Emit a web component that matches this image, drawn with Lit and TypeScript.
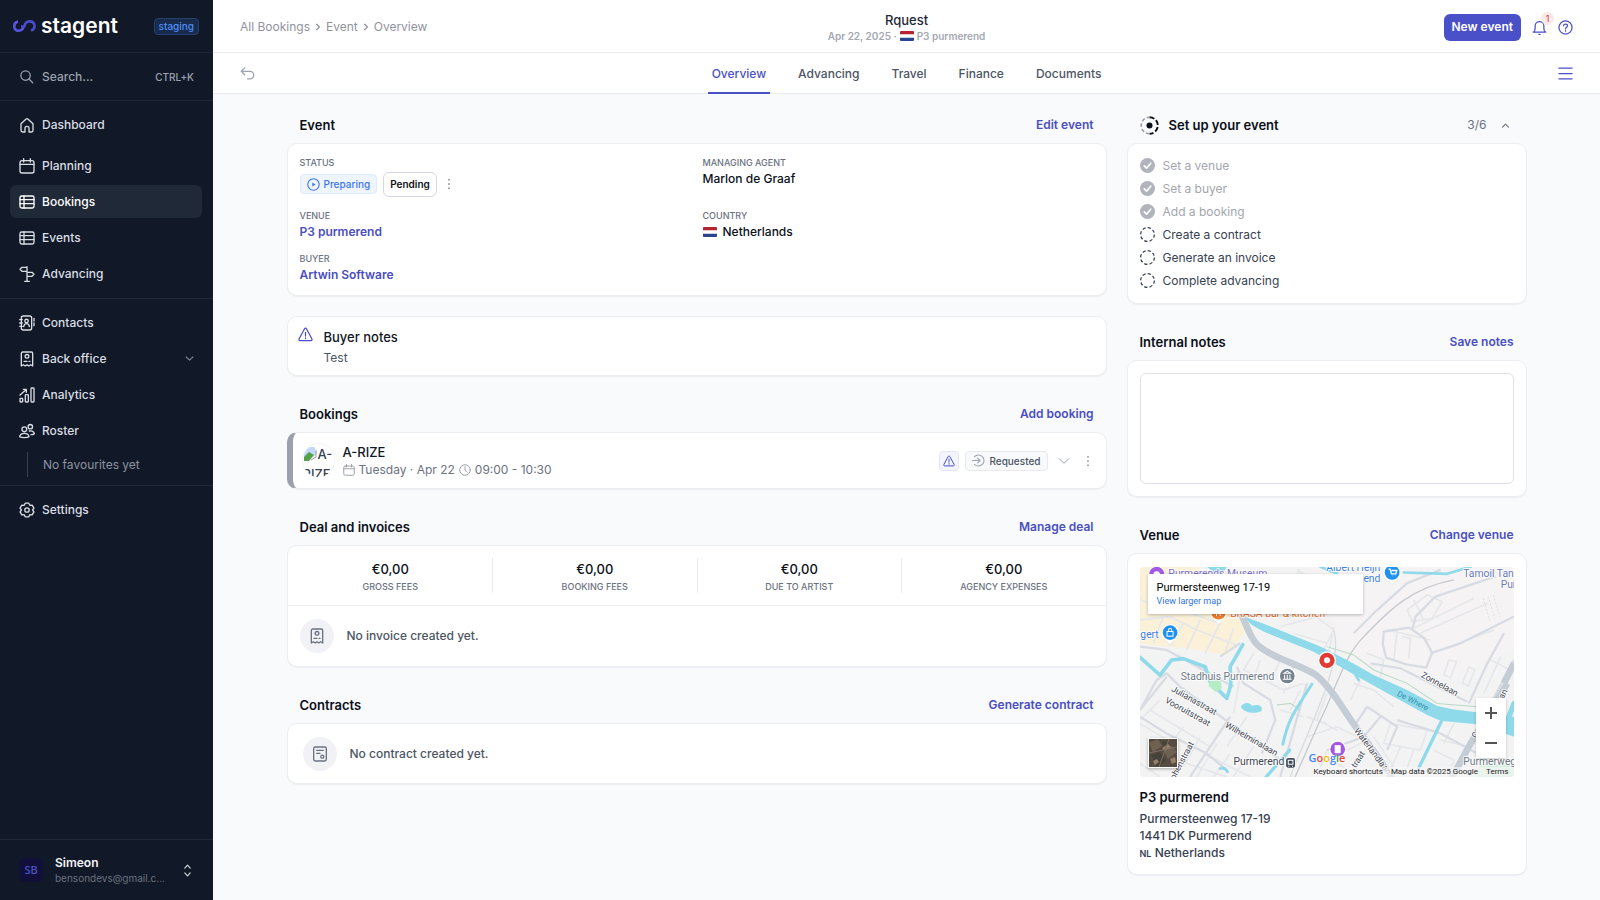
import { LitElement, html, css, svg, nothing } from "lit";
import type { TemplateResult, SVGTemplateResult } from "lit";
import { customElement } from "lit/decorators.js";
import { classMap } from "lit/directives/class-map.js";

const glyphs: Record<string, SVGTemplateResult> = {
  search: svg`<circle cx="10.5" cy="10.5" r="7.5"/><path d="M16 16l6 6"/>`,
  home: svg`<path d="M3 10.2 10.7 3a2 2 0 0 1 2.6 0L21 10.2V20a2.5 2.5 0 0 1-2.5 2.5H15V17a3 3 0 0 0-6 0v5.500H5.500A2.500 2.500 0 0 1 3 20z"/>`,
  calendar: svg`<rect x="1.500" y="4" width="21" height="18.500" rx="3"/><path d="M1.500 9.500h21M7 1v5M17 1v5"/>`,
  table: svg`<rect x="1.500" y="3" width="21" height="18" rx="2.500"/><path d="M1.500 8.500h21M1.500 14.500h21M7.500 3v18"/>`,
  signpost: svg`<path d="M12 1v22M8.500 23h7M12 2H4.500L1.500 5l3 3H12M12 9.500h7.500l3 3-3 3H12"/>`,
  contacts: svg`<rect x="3.500" y="1.500" width="15.500" height="21" rx="3"/><circle cx="11.300" cy="9" r="2.600"/><path d="M7 17.500c.5-3 2-4.500 4.300-4.500s3.800 1.500 4.300 4.500M1 7h4M1 12h4M1 17h4M22.500 5v4M22.500 12v4"/>`,
  receipt: svg`<path d="M3.500 22.500V3.500a2 2 0 0 1 2-2h13a2 2 0 0 1 2 2v19l-3-1.800-2.800 1.800-2.700-1.800-2.700 1.800-2.800-1.800z"/><circle cx="12" cy="8" r="2.800"/><path d="M7.500 15.500h4.500M15 15.500h1.500"/>`,
  chart: svg`<rect x="1.500" y="17" width="4" height="5.500" rx="1"/><rect x="9.500" y="11.500" width="4.500" height="11" rx="1"/><rect x="18" y="1.500" width="4.500" height="21" rx="1"/><path d="M1.500 12 10.500 4M6.500 3.500h4.500V8"/>`,
  people: svg`<circle cx="8" cy="9.500" r="3.600"/><path d="M1 20.500C1.500 17 4 15.500 8 15.500s6.500 1.500 7 5c-2 1.800-12 1.800-14 0z"/><circle cx="17" cy="5.500" r="3.300"/><path d="M15.500 12c4-.8 7 .8 7.500 4-1 1-3 1.500-5 1.500"/>`,
  gear: svg`<path d="M9.300 1.800h5.400l1.500 3.200 3.500-.3 2.700 4.600L20.300 12l2.100 2.700-2.700 4.600-3.500-.3-1.500 3.200H9.300L7.800 19l-3.500.3-2.700-4.600L3.700 12 1.600 9.300l2.700-4.600 3.500.3z"/><circle cx="12" cy="12" r="3.300"/>`,
  down: svg`<path d="M3 8l9 8.500L21 8"/>`,
  up: svg`<path d="M4 16.500l8-8 8 8"/>`,
  right: svg`<path d="M8 4l8 8-8 8"/>`,
  updown: svg`<path d="M7 7.500l5-5.500 5 5.500M7 16.500l5 5.500 5-5.500"/>`,
  undo: svg`<path d="M7.500 3 2 8.500l5.500 5.500M2 8.500h14a6 6 0 0 1 0 12h-4"/>`,
  bell: svg`<path d="M2 19.500c2.500-1 3-2.500 3-6V9.500a7 7 0 0 1 14 0v4c0 3.500.5 5 3 6z"/><path d="M11 22.800h2"/>`,
  help: svg`<circle cx="12" cy="12" r="10.500"/><path d="M8.800 9.300c.2-3.800 6.400-3.800 6.400 0 0 2.200-3.200 2.500-3.200 4.900M12 17v.8"/>`,
  menu: svg`<path d="M1.500 3.500h21M1.500 12h21M1.500 20.500h21"/>`,
  play: svg`<circle cx="12" cy="12" r="10.500"/><path d="M9.800 8.300v7.400l5.800-3.700z" fill="currentColor" stroke="none"/>`,
  alert: svg`<path d="M10.500 2.800c.7-1.200 2.300-1.200 3 0l8.800 16.400c.6 1.300-.2 2.600-1.500 2.600H3.200c-1.300 0-2.100-1.300-1.500-2.600z"/><path d="M12 8.500v6M12 17.300v1.200"/>`,
  clock: svg`<circle cx="12" cy="12" r="10.500"/><path d="M12 5.500V12l4 4.500"/>`,
  arrowin: svg`<path d="M4.500 4.800A10.300 10.300 0 1 1 4.500 19.200M1 12h14M10.500 7.500 15 12l-4.500 4.500"/>`,
  dots: svg`<g fill="currentColor" stroke="none"><circle cx="12" cy="3.500" r="1.900"/><circle cx="12" cy="12" r="1.900"/><circle cx="12" cy="20.500" r="1.900"/></g>`,
  contract: svg`<rect x="2.500" y="1.500" width="19" height="21" rx="2.500"/><path d="M7 6.500h10M7 11h5"/><circle cx="15.500" cy="16" r="2.300"/>`,
  done: svg`<circle cx="12" cy="12" r="12" fill="currentColor" stroke="none"/><path d="M6.800 12.500l3.700 3.800 6.700-8" stroke="#fff" stroke-width="2.600"/>`,
  todo: svg`<circle cx="12" cy="12" r="11" stroke-linecap="butt" stroke-dasharray="5.200 3.440"/>`,
  progress: svg`<g stroke-linecap="butt"><path d="M12 1.500a10.500 10.500 0 0 1 0 21" stroke="#0b0f19" stroke-width="2.400" stroke-dasharray="6.500 2.700"/><path d="M12 22.500a10.500 10.500 0 0 1 0-21" stroke="#9a9da6" stroke-width="2" stroke-dasharray="4.500 2.800"/></g><circle cx="12" cy="12" r="3.800" fill="#0b0f19" stroke="none"/>`,
};

const icon = (name: string, size = 16, weight = 2): TemplateResult => html`<svg
  class="icon" width=${size} height=${size} viewBox="0 0 24 24" fill="none" stroke="currentColor"
  stroke-width=${weight} stroke-linecap="round" stroke-linejoin="round" overflow="visible" aria-hidden="true">${glyphs[name]}</svg>`;

const flag = html`<svg class="icon" width="14" height="10" viewBox="0 0 14 10" role="img" aria-label="Dutch flag">
  <rect width="14" height="10" rx="1" fill="#fff"/>
  <path d="M0 3.300V1a1 1 0 0 1 1-1h12a1 1 0 0 1 1 1v2.300z" fill="#b5232e"/>
  <path d="M0 6.700V9a1 1 0 0 0 1 1h12a1 1 0 0 0 1-1V6.700z" fill="#27458f"/>
</svg>`;

const pin = (x: number, y: number, fill: string, r = 22): SVGTemplateResult => svg`<g transform="translate(${x} ${y})">
  <path d="M-17 18L0 37 17 18z" fill="#fff" stroke="#c9ccd1" stroke-width="1"/>
  <circle r=${r + 4} fill="#fff"/><circle r=${r} fill=${fill}/></g>`;

@customElement("venue-map")
class VenueMap extends LitElement {
  static styles = css`
    :host { display: block; position: relative; height: 210px; overflow: hidden; border-radius: 4px; font-family: Roboto, sans-serif; }
    .canvas { display: block; width: 100%; height: 100%; }
    .info { position: absolute; left: 8px; top: 7px; width: 215px; height: 40px; box-sizing: border-box; padding: 6px 9px; background: #fff; box-shadow: 0 1px 3px rgba(0,0,0,.25); }
    .info strong { display: block; font-size: 11px; line-height: 15px; font-weight: 400; color: #000; }
    .info a { display: block; font-size: 9px; line-height: 12px; color: #2f74e0; text-decoration: none; }
    .zoom { position: absolute; right: 8px; top: 131px; width: 30px; background: #fff; box-shadow: 0 1px 3px rgba(0,0,0,.2); }
    .zoom button { display: grid; place-items: center; width: 30px; height: 30px; padding: 0; border: 0; background: none; }
    .zoom svg { display: block; }
    .layer { position: absolute; left: 8px; bottom: 9px; width: 30px; height: 30px; padding: 0; border: 1px solid #fff; background: #5d5148; box-shadow: 0 1px 3px rgba(0,0,0,.3); overflow: hidden; }
    .layer svg { display: block; }
    .google { position: absolute; left: 169px; bottom: 11px; font-family: "Open Sans", sans-serif; font-size: 11px; line-height: 16px; font-weight: 600; text-shadow: 0 0 2px #fff; }
    .b { color: #4285f4; } .r { color: #ea4335; } .y { color: #fbbc05; } .g { color: #34a853; }
    .legal { position: absolute; right: 0; bottom: 0; display: flex; gap: 8px; padding: 0 5px; font-size: 8px; line-height: 10px; color: #222; background: rgba(245,245,245,.7); }
    .legal a { color: inherit; text-decoration: none; }
    .legal button { font: inherit; color: inherit; padding: 0; border: 0; background: none; }
    .place { font-size: 31px; }
    .street { font-size: 26px; fill: #3c4450; }
    .halo { paint-order: stroke; stroke: #fff; stroke-width: 5px; stroke-linejoin: round; }
  `;

  private drawing() {
    return html`<svg class="canvas" viewBox="60 51 1120 630" preserveAspectRatio="xMidYMid slice" role="img" aria-label="Map of Purmerend">
      <rect x="0" y="0" width="1300" height="760" fill="#f3f3f4"/>
      <path d="M60 51h170l120 130 30 60-60 75-120-22-140-12z" fill="#fbf0d8"/>
      <path d="M560 51h620v250l-200 80-300-80-40-60z" fill="#f5f3f3"/>
      <path d="M1080 640h100v50h-120z" fill="#d5f1de"/>
      <g fill="none" stroke="#e5e7ea" stroke-width="5" stroke-linejoin="round">
        <path d="M60 210l90-10 80 40 120 45M130 200l-30 80M190 220l-40 70M240 210l-40 90M300 220l-45 90M180 180l120 40M340 235l-25 70M60 150l60 20"/>
        <path d="M440 205l60-100M500 210l50-60M560 180l80 60-30 60M480 230l150-40M520 250l100 30M640 230l-15 80M540 60l-50 60M600 100l-70-40M680 180l40-70M640 160l60 30"/>
        <path d="M860 180l60-45 45 20-30 50-60 10zM880 235l180-90M900 250l200-90M960 300l160-60M880 150l30 60M985 330l-15 45 20 8 18-48zM1045 350l-20 50 18 8 20-48zM800 240l130 30M830 240l-10 90M845 260l25 5-5 60M740 310l50 20-10 50M1110 330l60 30M1090 430l50-110"/>
        <path d="M400 310l-30 50 120 60 60-20M420 330l-20 60M480 330l-30 70M520 350l-30 80M540 420l-30 60M480 480l70 20M560 500l60 20M360 380l-20 110M560 560l90-30 60 30"/>
        <path d="M620 430l-30 80 60 30M700 400l60 20 60 50M720 390l-30 60M810 520l110 20-20 60-110-20zM760 560l60 90M840 590l-40 90M880 600l-30 80M940 600l60 30-20 50M960 570l90 20M1000 520l-30 60M680 600l60-30 60 80M620 600l-30 80M650 640l50 30"/>
        <path d="M60 520l100 60M90 480l180 110M120 450l-60 60M190 530l-60 80M240 560l-50 90M290 580l-60 100M330 610l-50 70M340 530l90 50M380 500l-60 90M200 640l120 40M400 590l-60 90M250 610l140 70M60 640l60 40"/>
      </g>
      <path d="M1088 145l20 70M1103 140l20 68M1118 135l20 66" fill="none" stroke="#d3d6db" stroke-width="2" stroke-dasharray="6 5"/>
      <g fill="none" stroke="#d8dce2" stroke-width="7" stroke-linejoin="round">
        <path d="M60 290l80 10 110 60M60 480l50-90 30-20 40 40 150 110 150 110M140 380l-80 100M330 500l-120 180M350 350l20 50 80 50 15 60-40 100M250 360l90 50M300 320l60-40M60 500l80 50 120 60 60 50"/>
        <path d="M700 250l60-60 100-90 100-40M790 245l75-12 45 30 25 45-18 45-60-10-60-20-10-40zM875 240l10-40 60-60 120-40 60-20M1150 250l-50 90-55 120M930 310l90-30 160-80M750 340l90 15 120 60 80 40M740 470l-40 60M740 470l90 60-30 70M830 510l130 40 110 60M620 600l110-40 50-60M560 400l-80 280M1180 330l-80 150"/>
      </g>
      <path d="M1000 90C860 115 790 200 730 260c-60 60-80 150-130 250l-80 180" fill="none" stroke="#c6c9ce" stroke-width="4"/>
      <path d="M640 240c30 90-60 260-130 440" fill="none" stroke="#dadce0" stroke-width="4"/>
      <g fill="none" stroke="#b9d9c2" stroke-width="3"><path d="M620 290l80 25 60 45 100 40 90 60 120 10"/><path d="M470 465l40-5 30 20"/></g>
      <g fill="none" stroke="#8edaea" stroke-linejoin="round" stroke-linecap="round">
        <path d="M60 322l60 53 35-45 35-4 65 24 15 45 50 50 12-40-2-55 38-66" stroke-width="11"/>
        <path d="M575 402c-50 80-70 100-87 180" stroke-width="9"/>
        <path d="M508 600l-70 80M962 515l-68 140" stroke-width="10"/>
        <path d="M600 51l50 20M850 68l130 4 70-21" stroke-width="8"/>
        <path d="M300 655q15-5 22 10M705 375l10 15" stroke-width="8"/>
        <path d="M1180 460l-15 40" stroke-width="16"/>
      </g>
      <path d="M260 51h60l-20 30zM362 470c10-16 26-14 34-2 16-8 34 0 28 14-16 12-54 6-62-12z" fill="#8edaea"/>
      <path d="M275 375l25 5 5 35-18 12-22-20z" fill="#b4edc5"/>
      <path d="M368 198l72 27 160 65 80 40 80 45 100 45 90 48 50 10 180 22v60l-80-28-40-10-100-10-40-17-100-55-100-55-60-35-80-45-150-60-35-20z" fill="#8edaea"/>
      <path d="M362 190c20 40 25 70 50 95 40 38 130 60 175 90 50 40 90 120 130 170 40 55 70 90 100 145" fill="none" stroke="#c4ccd6" stroke-width="20"/>
      <path d="M1160 400l-110 180-60 110M1180 340l-30 60" fill="none" stroke="#c4ccd6" stroke-width="20"/>
      <g class="place halo">
        <text x="145" y="82" fill="#7b6fc0">Purmerends Museum</text>
        <text x="618" y="65" fill="#3b7de0">Albert Heijn</text>
        <text x="729" y="97" fill="#3b7de0">end</text>
        <text x="1028" y="82" fill="#6b78b8">Tamoil Tankstation</text>
        <text x="1140" y="113" fill="#6b78b8">Purmerend</text>
        <text x="330" y="201" fill="#e0702a">BRASA bar &amp; kitchen</text>
        <text x="61" y="263" fill="#3b7de0">gert</text>
        <text x="182" y="390" fill="#6d7785">Stadhuis Purmerend</text>
        <text x="340" y="646" fill="#3c4450">Purmerend</text>
        <text x="1028" y="646" fill="#6d7785">Purmerweg</text>
      </g>
      <g class="street halo">
        <text transform="translate(152 422) rotate(29)">Julianastraat</text>
        <text transform="translate(133 456) rotate(29)">Vooruitstraat</text>
        <text transform="translate(313 530) rotate(30)">Wilhelminalaan</text>
        <text transform="translate(900 380) rotate(29)">Zonnelaan</text>
        <text transform="translate(700 542) rotate(53)">Waterlandlaan</text>
        <text transform="translate(706 655) rotate(-58)">traat</text>
        <text transform="translate(164 690) rotate(-62)">ohenstraat</text>
        <text transform="translate(1148 448) rotate(-62)">an</text>
        <text transform="translate(1068 566) rotate(-62)">C</text>
      </g>
      <text transform="translate(828 436) rotate(27)" font-size="24" fill="#3592ab">De Where</text>
      <circle cx="110" cy="74" r="26" fill="#fff"/><circle cx="110" cy="74" r="23" fill="#a259e6"/><circle cx="110" cy="74" r="10" fill="#fff"/>
      ${pin(815, 68, "#1e90f0")}
      ${pin(295, 187, "#ef7f31")}
      ${pin(150, 248, "#1e90f0")}
      ${pin(501, 378, "#76838f")}
      ${pin(652, 597, "#a259e6")}
      ${pin(620, 331, "#e03c35", 23)}
      <circle cx="620" cy="331" r="9" fill="#fff"/>
      <rect x="643" y="585" width="18" height="24" fill="#fff"/>
      <path d="M141 245h18v14h-18zM145 245v-4a5 5 0 0 1 10 0v4" fill="none" stroke="#fff" stroke-width="3"/>
      <path d="M804 58h5l4 14h13l3-10h-16M815 78h1M824 78h1" fill="none" stroke="#fff" stroke-width="4"/>
      <path d="M488 388h26M491 370h20l-10-7zM493 374v12M501 374v12M509 374v12" fill="none" stroke="#fff" stroke-width="3"/>
      <path d="M289 180v18M300 180v18M285 180v8h8v-8" fill="none" stroke="#fff" stroke-width="3"/>
      <rect x="496" y="622" width="30" height="32" rx="8" fill="#3f4b5a" stroke="#fff" stroke-width="3"/>
      <path d="M504 630h14v12h-14zM504 648h3M515 648h3" fill="none" stroke="#fff" stroke-width="3"/>
    </svg>`;
  }

  render() {
    return html`${this.drawing()}
      <div class="info"><strong>Purmersteenweg 17-19</strong><a href="#map">View larger map</a></div>
      <button class="layer" aria-label="Show satellite imagery">
        <svg width="28" height="28" viewBox="0 0 28 28"><rect width="28" height="28" fill="#574b41"/>
          <path d="M0 4l9-4 4 7-9 6zM15 12l8-5 5 6-9 7z" fill="#6f6151"/><path d="M2 16l9-3 6 9-9 6zM12 2l7 1-3 6z" fill="#45423a"/>
          <path d="M13 9l6-4 3 3-6 4zM4 22l4-2 2 3-4 3zM21 20l5-2 1 5-4 2z" fill="#94806b"/><path d="M0 14l28-6M10 28L20 0" stroke="#7a6f63"/></svg>
      </button>
      <div class="zoom">
        <button aria-label="Zoom in"><svg width="14" height="14"><path d="M7 1v12M1 7h12" stroke="#555" stroke-width="2"/></svg></button>
        <button aria-label="Zoom out"><svg width="14" height="14"><path d="M1 7h12" stroke="#555" stroke-width="2"/></svg></button>
      </div>
      <div class="google" aria-label="Google"><span class="b">G</span><span class="r">o</span><span class="y">o</span><span class="b">g</span><span class="g">l</span><span class="r">e</span></div>
      <div class="legal"><button>Keyboard shortcuts</button><span>Map data ©2025 Google</span><a href="#terms">Terms</a></div>`;
  }
}

interface NavItem { icon: string; label: string; active?: boolean; expandable?: boolean; first?: boolean; }

@customElement("app-root")
class AppRoot extends LitElement {
  static styles = css`
    :host { display: flex; min-height: 100vh; font-family: Inter, sans-serif; font-size: 12px; line-height: 20px; color: #111827; background: #f8fafc; }
    * { box-sizing: border-box; }
    h1, h2, h3, p, ul, dl, dd { margin: 0; padding: 0; font-weight: inherit; font-size: inherit; }
    ul { list-style: none; }
    a { color: inherit; text-decoration: none; }
    button { font: inherit; color: inherit; padding: 0; border: 0; background: none; }
    .icon { display: block; flex: none; }

    .side { position: sticky; top: 0; flex: none; display: flex; flex-direction: column; width: 213px; height: 100vh; background: #111827; color: #d9dde4; font-weight: 500; }
    .brand { display: flex; align-items: center; justify-content: space-between; height: 53px; padding: 0 14px 0 13px; border-bottom: 1px solid #1f2937; }
    .logo { display: flex; align-items: center; gap: 5px; color: #fff; font-size: 21px; font-weight: 600; line-height: 28px; }
    .env { height: 17px; padding: 0 4px; border: 1px solid #24406f; border-radius: 4px; background: #182b4d; color: #4f8df5; font-size: 10px; line-height: 15px; }
    .search { display: flex; align-items: center; gap: 8px; height: 48px; padding: 0 19px; border-bottom: 1px solid #1f2937; color: #9ca3af; }
    .find { flex: 1; min-width: 0; padding: 0; border: 0; outline: 0; background: none; font: inherit; color: inherit; }
    .find::placeholder { color: #9ca3af; opacity: 1; }
    .keys { font-size: 10px; }
    .group { display: flex; flex-direction: column; gap: 3px; padding: 7px 11px 8px 10px; border-bottom: 1px solid #1f2937; }
    .group.last { border: 0; }
    .item { display: flex; align-items: center; gap: 7px; height: 33px; padding: 0 8px 0 9px; border-radius: 6px; }
    .item.first { margin-bottom: 5px; }
    .item.active { background: #1f2937; color: #fff; }
    .item .label { flex: 1; }
    .item .more { color: #7b8494; }
    .empty { display: flex; align-items: center; height: 25px; margin: 2px 0 0 17px; padding-left: 15px; border-left: 1px solid #374151; color: #8b93a1; font-weight: 400; }
    .user { display: flex; align-items: center; gap: 12px; height: 61px; margin-top: auto; padding: 0 19px; border-top: 1px solid #1f2937; text-align: left; }
    .initials { display: grid; place-items: center; width: 24px; height: 24px; border-radius: 6px; background: #11103a; color: #4f52c9; font-family: "Noto Sans", sans-serif; font-size: 11px; }
    .who { flex: 1; min-width: 0; font-size: 10px; line-height: 14px; font-weight: 400; color: #6b7280; }
    .who strong { display: block; font-size: 12px; line-height: 16px; font-weight: 600; color: #f3f4f6; }
    .mail { display: block; overflow: hidden; text-overflow: ellipsis; white-space: nowrap; }

    .main { flex: 1; min-width: 0; display: flex; flex-direction: column; }
    .top, .tabs { display: grid; grid-template-columns: 1fr auto 1fr; align-items: center; padding: 0 27px; background: #fff; border-bottom: 1px solid #e8eaee; }
    .top { height: 53px; padding-top: 2px; }
    .crumbs { display: flex; align-items: center; gap: 4px; color: #8f949e; }
    .headline { text-align: center; }
    .headline h1 { font-size: 13px; line-height: 18px; font-weight: 500; color: #1f2937; }
    .sub { display: flex; align-items: center; justify-content: center; gap: 3px; font-size: 10px; line-height: 14px; font-weight: 600; color: #a3a8b2; }
    .actions { display: flex; align-items: center; justify-content: flex-end; gap: 11px; color: #4a50c8; }
    .primary { height: 27px; padding: 0 8px; border-radius: 6px; background: #4a50c8; color: #fff; font-weight: 600; }
    .bell { position: relative; }
    .count { position: absolute; left: 9px; top: -8px; width: 13px; height: 13px; border-radius: 50%; background: #fde8e8; color: #d03a3a; font-size: 9px; line-height: 13px; text-align: center; }
    .tabs { height: 41px; color: #9ca3af; }
    .tablist { display: flex; gap: 24px; align-self: stretch; color: #4b5563; font-weight: 500; }
    .tab { display: flex; align-items: center; margin-bottom: -1px; padding: 2px 4px 0; border-bottom: 2px solid transparent; }
    .tab.active { color: #4a50c8; border-color: #4a50c8; }
    .burger { justify-self: end; color: #4a50c8; }

    .content { display: grid; grid-template-columns: minmax(0, 1fr) 400px; align-items: start; gap: 20px; width: 100%; max-width: 1280px; margin: 0 auto; padding: 13px 20px 26px; }
    .col { display: flex; flex-direction: column; gap: 20px; }
    .head { display: flex; align-items: center; justify-content: space-between; height: 36px; padding: 0 13px; }
    .head h2 { font-size: 13px; font-weight: 600; color: #0b0f19; }
    .link { font-weight: 600; color: #4a4fc0; }
    .card { border: 1px solid #eceef2; border-radius: 10px; background: #fff; box-shadow: 0 1px 1px rgba(17,24,39,.05); }

    .facts { display: grid; grid-template-columns: 1fr 1fr; gap: 11px 12px; padding: 13px 12px 10px; }
    .facts dt { font-size: 9px; line-height: 12px; font-weight: 500; color: #6b7280; }
    .facts dd { display: flex; align-items: center; min-height: 20px; font-weight: 500; color: #0b0f19; }
    .facts dd.states { gap: 6px; height: 30px; }
    .facts .flagged { gap: 6px; }
    .chip { display: flex; align-items: center; gap: 4px; height: 20px; padding: 0 6px; border: 1px solid #dfeafe; border-radius: 4px; background: #eff5ff; color: #3b74e8; font-size: 10px; font-weight: 500; }
    .outline { height: 25px; padding: 0 6px; border: 1px solid #d5d8de; border-radius: 6px; background: #fff; font-size: 10px; font-weight: 600; }
    .dots { display: block; color: #8f949e; }
    .note { display: flex; gap: 11px; padding: 10px 10px 7px; }
    .note .icon { color: #4a50c8; }
    .note h3 { font-size: 13px; font-weight: 500; line-height: 20px; }
    .note p { color: #4b5563; line-height: 21px; }

    .booking { display: flex; align-items: center; gap: 8px; height: 57px; padding: 0 12px 0 9px; border-left: 6px solid #9ca0ae; }
    .avatar { flex: none; width: 33px; height: 35px; overflow: hidden; border-radius: 50%; border: 1px solid #f3f4f6; color: #374151; font-size: 13px; line-height: 20px; font-weight: 500; }
    .avatar .broken { display: inline-block; vertical-align: -2px; margin-left: 1px; }
    .avatar .alt { padding-left: 1px; }
    .avatar .row { display: block; white-space: nowrap; }
    .act { flex: 1; }
    .act h3 { font-size: 13px; font-weight: 500; line-height: 18px; }
    .when { display: flex; align-items: center; gap: 4px; line-height: 18px; color: #6b7280; }
    .when .icon { color: #9ca3af; }
    .warn { display: grid; place-items: center; width: 20px; height: 20px; border: 1px solid #e3e4fa; border-radius: 4px; background: #f3f4fe; color: #4a50c8; }
    .chip.plain { border-color: #e8eaee; background: #f8f9fb; color: #4b5563; }
    .chip.plain .icon { color: #9ca3af; }
    .tools { display: flex; align-items: center; gap: 6px; color: #9ca3af; }
    .tools .toggle { margin: 0 6px 0 4px; }

    .sums { display: grid; grid-template-columns: repeat(4, 1fr); padding: 12px 0; border-bottom: 1px solid #eceef2; text-align: center; }
    .sum { height: 35px; border-left: 1px solid #e8eaee; }
    .sum:first-child { border-color: transparent; }
    .sum strong { display: block; font-size: 13px; line-height: 22px; font-weight: 500; color: #0b0f19; }
    .sum span { display: block; font-size: 9px; line-height: 13px; font-weight: 500; color: #6b7280; }
    .none { display: flex; align-items: center; gap: 13px; height: 60px; padding: 0 12px; color: #4b5563; font-weight: 500; }
    .none.inset { height: 61px; padding: 0 15px; }
    .disc { display: grid; place-items: center; width: 34px; height: 34px; border-radius: 50%; background: #f1f2f5; color: #6b7280; }

    .progress { display: flex; align-items: center; gap: 10px; flex: 1; }
    .tally { display: flex; align-items: center; gap: 14px; padding-right: 4px; color: #6b7280; }
    .steps { padding: 10px 12px 11px; }
    .steps li { display: flex; align-items: center; gap: 8px; height: 23px; color: #374151; }
    .steps li.done { color: #a3a6ae; }
    .steps li.done .icon { color: #b1b4bc; }
    .notes { padding: 12px; }
    .notes textarea { display: block; width: 100%; height: 111px; padding: 8px; border: 1px solid #dfe1e6; border-radius: 6px; background: #fff; font: inherit; resize: none; }
    .place { padding: 13px 12px 12px; }
    .place h3 { padding-top: 9px; font-size: 13px; line-height: 22px; font-weight: 600; color: #0b0f19; }
    .place address { padding-top: 2px; font-style: normal; font-weight: 500; line-height: 17px; color: #374151; }
    .code { font-size: 9px; font-weight: 600; }
  `;

  private readonly primaryNav: NavItem[] = [
    { icon: "home", label: "Dashboard", first: true },
    { icon: "calendar", label: "Planning" },
    { icon: "table", label: "Bookings", active: true },
    { icon: "table", label: "Events" },
    { icon: "signpost", label: "Advancing" },
  ];
  private readonly officeNav: NavItem[] = [
    { icon: "contacts", label: "Contacts" },
    { icon: "receipt", label: "Back office", expandable: true },
    { icon: "chart", label: "Analytics" },
    { icon: "people", label: "Roster" },
  ];
  private readonly tabs = ["Overview", "Advancing", "Travel", "Finance", "Documents"];
  private readonly sums = ["GROSS FEES", "BOOKING FEES", "DUE TO ARTIST", "AGENCY EXPENSES"];
  private readonly steps: [string, boolean][] = [
    ["Set a venue", true], ["Set a buyer", true], ["Add a booking", true],
    ["Create a contract", false], ["Generate an invoice", false], ["Complete advancing", false],
  ];

  private navItem(n: NavItem) {
    return html`<a href="#" class=${classMap({ item: true, active: !!n.active, first: !!n.first })}>
      ${icon(n.icon)}<span class="label">${n.label}</span>
      ${n.expandable ? html`<span class="more">${icon("down", 9, 3)}</span>` : nothing}</a>`;
  }

  private head(title: string, action: string, id = "") {
    return html`<div class="head"><h2 id=${id || nothing}>${title}</h2><a class="link" href="#">${action}</a></div>`;
  }

  private sidebar() {
    return html`<aside class="side">
      <div class="brand">
        <a class="logo" href="#">
          <svg class="icon" width="23" height="12" viewBox="0 0 23 12" fill="none" stroke-width="2.600" aria-hidden="true">
            <path d="M5 1.600C-.6 3.400.4 10.700 5.600 10.700c3 0 4.600-1.700 4.900-4.300" stroke="#5a55e0"/>
            <path d="M8 6.500h3.200C12 3.400 13.600 1.400 16.600 1.400c5.600 0 6.800 7.400 1.400 9.200" stroke="#4b4bd0"/>
          </svg>
          <span>stagent</span>
        </a>
        <span class="env">staging</span>
      </div>
      <div class="search">${icon("search", 15)}
        <input class="find" type="text" placeholder="Search..." aria-label="Search"><span class="keys">CTRL+K</span>
      </div>
      <nav class="group">${this.primaryNav.map((n) => this.navItem(n))}</nav>
      <nav class="group">${this.officeNav.map((n) => this.navItem(n))}<div class="empty">No favourites yet</div></nav>
      <nav class="group last">${this.navItem({ icon: "gear", label: "Settings" })}</nav>
      <button class="user">
        <span class="initials">SB</span>
        <span class="who"><strong>Simeon</strong><span class="mail">bensondevs@gmail.c...</span></span>
        ${icon("updown", 13)}
      </button>
    </aside>`;
  }

  private header() {
    return html`<header class="top">
        <nav class="crumbs" aria-label="Breadcrumb">
          <a href="#">All Bookings</a>${icon("right", 8, 4)}<a href="#">Event</a>${icon("right", 8, 4)}<a href="#">Overview</a>
        </nav>
        <div class="headline"><h1>Rquest</h1><div class="sub">Apr 22, 2025 · ${flag} P3 purmerend</div></div>
        <div class="actions">
          <button class="primary">New event</button>
          <button class="bell" aria-label="Notifications">${icon("bell", 15)}<span class="count">1</span></button>
          <button aria-label="Help">${icon("help", 15)}</button>
        </div>
      </header>
      <div class="tabs">
        <a href="#" aria-label="Back">${icon("undo", 15)}</a>
        <nav class="tablist">${this.tabs.map((t, i) => html`<a href="#" class=${classMap({ tab: true, active: i === 0 })}>${t}</a>`)}</nav>
        <button class="burger" aria-label="Menu">${icon("menu", 15)}</button>
      </div>`;
  }

  private leftColumn() {
    return html`<div class="col">
      <section>${this.head("Event", "Edit event")}
        <dl class="card facts">
          <div><dt>STATUS</dt><dd class="states">
            <span class="chip">${icon("play", 13)}Preparing</span><button class="outline">Pending</button>
            <button class="dots" aria-label="Status options">${icon("dots", 12)}</button></dd></div>
          <div><dt>MANAGING AGENT</dt><dd>Marlon de Graaf</dd></div>
          <div><dt>VENUE</dt><dd><a class="link" href="#">P3 purmerend</a></dd></div>
          <div><dt>COUNTRY</dt><dd class="flagged">${flag}Netherlands</dd></div>
          <div><dt>BUYER</dt><dd><a class="link" href="#">Artwin Software</a></dd></div>
        </dl>
      </section>
      <section class="card note">${icon("alert", 15)}<div><h3>Buyer notes</h3><p>Test</p></div></section>
      <section>${this.head("Bookings", "Add booking")}
        <article class="card booking">
          <div class="avatar" role="img" aria-label="A-RIZE">
            <span class="row"><svg class="broken" width="13" height="14" viewBox="0 0 13 14"><path d="M0 3l6-3h4l3 4v3L7 11H0z" fill="#c4dafa"/><path d="M0 10l5-5 5 3-5 6H0z" fill="#55a049"/><path d="M12 4v6l-5 3" stroke="#a3a3a3" fill="none"/></svg><span class="alt">A-</span></span>
            <span class="row">RIZE</span>
          </div>
          <div class="act"><h3>A-RIZE</h3>
            <div class="when">${icon("calendar", 12)}Tuesday · Apr 22 ${icon("clock", 12)}09:00 - 10:30</div></div>
          <div class="tools">
            <span class="warn">${icon("alert", 12)}</span>
            <span class="chip plain">${icon("arrowin", 13)}Requested</span>
            <button class="toggle" aria-label="Expand booking">${icon("down", 12)}</button>
            <button aria-label="Booking options">${icon("dots", 12)}</button>
          </div>
        </article>
      </section>
      <section>${this.head("Deal and invoices", "Manage deal")}
        <div class="card">
          <div class="sums">${this.sums.map((s) => html`<div class="sum"><strong>€0,00</strong><span>${s}</span></div>`)}</div>
          <div class="none"><span class="disc">${icon("receipt")}</span>No invoice created yet.</div>
        </div>
      </section>
      <section>${this.head("Contracts", "Generate contract")}
        <div class="card none inset"><span class="disc">${icon("contract")}</span>No contract created yet.</div>
      </section>
    </div>`;
  }

  private rightColumn() {
    return html`<div class="col">
      <section>
        <div class="head"><div class="progress">${icon("progress", 19)}<h2>Set up your event</h2></div>
          <div class="tally">3/6<button aria-label="Collapse">${icon("up", 9, 3)}</button></div></div>
        <ul class="card steps">${this.steps.map(([label, done]) => html`<li class=${classMap({ done })}>${icon(done ? "done" : "todo", 15)}${label}</li>`)}</ul>
      </section>
      <section>${this.head("Internal notes", "Save notes", "notes-title")}
        <div class="card notes"><textarea aria-labelledby="notes-title"></textarea></div>
      </section>
      <section>${this.head("Venue", "Change venue")}
        <div class="card place"><venue-map></venue-map>
          <h3>P3 purmerend</h3>
          <address>Purmersteenweg 17-19<br>1441 DK Purmerend<br><span class="code">NL</span> Netherlands</address>
        </div>
      </section>
    </div>`;
  }

  render() {
    return html`${this.sidebar()}
      <div class="main">${this.header()}<main class="content">${this.leftColumn()}${this.rightColumn()}</main></div>`;
  }
}
